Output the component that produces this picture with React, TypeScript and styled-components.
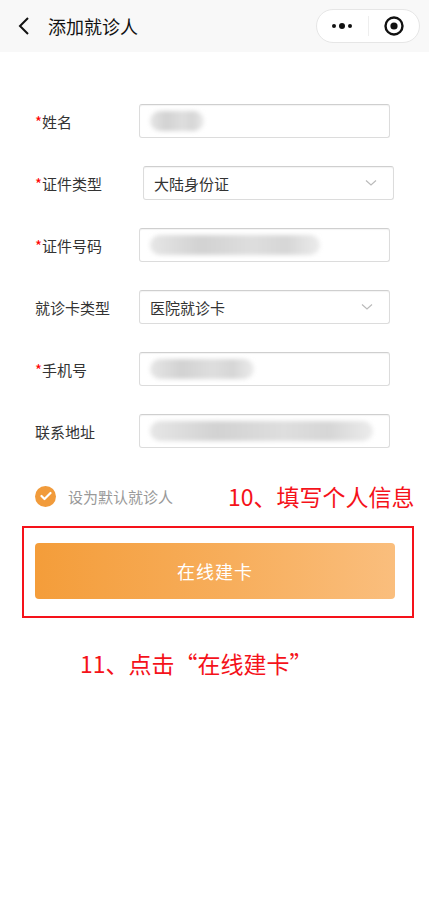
import styled, { createGlobalStyle } from 'styled-components'

const GlobalStyle = createGlobalStyle`
  html, body {
    margin: 0;
    padding: 0;
    background: #fff;
  }
  body {
    font-family: "Noto Sans CJK SC", "Noto Sans", sans-serif;
    color: #333;
  }
`

const Page = styled.div`
  width: 429px;
  min-height: 900px;
  background: #fff;
`

const NavBar = styled.div`
  height: 52px;
  background: #f8f8f8;
  display: flex;
  align-items: center;
  padding: 0 9px 0 14px;
`

const BackBtn = styled.div`
  width: 20px;
  height: 24px;
  display: flex;
  align-items: center;
  justify-content: center;
`

const NavTitle = styled.div`
  margin-left: 14px;
  font-size: 18px;
  color: #111;
  flex: 1;
`

const Capsule = styled.div`
  width: 104px;
  height: 34px;
  box-sizing: border-box;
  border: 1px solid #e6e6e6;
  border-radius: 17px;
  background: #fff;
  display: flex;
  align-items: center;
`

const CapsuleHalf = styled.div`
  flex: 1;
  height: 100%;
  display: flex;
  align-items: center;
  justify-content: center;
`

const CapsuleSep = styled.div`
  width: 1px;
  height: 20px;
  background: #eee;
`

const Form = styled.div`
  padding: 52px 0 0 35px;
  display: flex;
  flex-direction: column;
  gap: 28px;
`

const Row = styled.div`
  display: flex;
  align-items: center;
  height: 34px;
`

const Label = styled.div`
  width: 104px;
  font-size: 15px;
  color: #333;
`

const Star = styled.span`
  color: #f00;
`

const Field = styled.div<{ $shift?: number }>`
  width: 251px;
  height: 34px;
  margin-left: ${p => p.$shift || 0}px;
  box-sizing: border-box;
  border: 1px solid #dcdcdc;
  border-top-color: #cfcfcf;
  border-radius: 3px;
  box-shadow: inset 0 1px 1px rgba(0, 0, 0, 0.05);
  display: flex;
  align-items: center;
  padding: 0 16px 0 10px;
  position: relative;
  overflow: hidden;
`

const FieldText = styled.div`
  flex: 1;
  font-size: 15px;
  color: #333;
`

const Smudge = styled.div<{ $w: number }>`
  width: ${p => p.$w}px;
  height: 20px;
  background: linear-gradient(90deg, #e6e6e6, #d2d2d2 30%, #dedede 60%, #d6d6d6 80%, #ececec);
  border-radius: 10px;
  filter: blur(2px);
`

const CheckRow = styled.div`
  display: flex;
  align-items: center;
  padding: 37px 0 0 35px;
  height: 22px;
`

const CheckCircle = styled.div`
  width: 21px;
  height: 21px;
  border-radius: 50%;
  background: #f19b3b;
  display: flex;
  align-items: center;
  justify-content: center;
`

const CheckText = styled.div`
  width: 160px;
  margin-left: 12px;
  font-size: 15px;
  color: #999;
`

const Note = styled.div<{ $left: number }>`
  margin-left: ${p => p.$left}px;
  font-size: 23px;
  color: #f5121a;
  white-space: nowrap;
`

const HighlightBox = styled.div`
  margin: 19px 0 0 22px;
  width: 392px;
  height: 92px;
  box-sizing: border-box;
  border: 2px solid #f5121a;
  padding: 15px 0 0 11px;
`

const SubmitBtn = styled.div`
  width: 360px;
  height: 56px;
  border-radius: 4px;
  background: linear-gradient(90deg, #f49d3a, #f7ae5c 55%, #fabe7d);
  color: #fff;
  font-size: 18px;
  display: flex;
  align-items: center;
  justify-content: center;
  letter-spacing: 1px;
`

const Chevron = () => (
  <svg width="12" height="8" viewBox="0 0 12 8">
    <path d="M1 1.5 L6 6 L11 1.5" fill="none" stroke="#bbb" strokeWidth="1.2" />
  </svg>
)

export default function App() {
  return (
    <Page>
      <GlobalStyle />
      <NavBar>
        <BackBtn>
          <svg width="12" height="20" viewBox="0 0 12 20">
            <path d="M10 2 L2 10 L10 18" fill="none" stroke="#111" strokeWidth="2" />
          </svg>
        </BackBtn>
        <NavTitle>添加就诊人</NavTitle>
        <Capsule>
          <CapsuleHalf>
            <svg width="24" height="8" viewBox="0 0 24 8">
              <circle cx="4" cy="4" r="2" fill="#111" />
              <circle cx="12" cy="4" r="3" fill="#111" />
              <circle cx="20" cy="4" r="2" fill="#111" />
            </svg>
          </CapsuleHalf>
          <CapsuleSep />
          <CapsuleHalf>
            <svg width="22" height="22" viewBox="0 0 22 22">
              <circle cx="11" cy="11" r="8.5" fill="none" stroke="#111" strokeWidth="2.4" />
              <circle cx="11" cy="11" r="3.6" fill="#111" />
            </svg>
          </CapsuleHalf>
        </Capsule>
      </NavBar>

      <Form>
        <Row>
          <Label><Star>*</Star>姓名</Label>
          <Field><Smudge $w={54} /></Field>
        </Row>
        <Row>
          <Label><Star>*</Star>证件类型</Label>
          <Field $shift={4}>
            <FieldText>大陆身份证</FieldText>
            <Chevron />
          </Field>
        </Row>
        <Row>
          <Label><Star>*</Star>证件号码</Label>
          <Field><Smudge $w={170} /></Field>
        </Row>
        <Row>
          <Label>就诊卡类型</Label>
          <Field>
            <FieldText>医院就诊卡</FieldText>
            <Chevron />
          </Field>
        </Row>
        <Row>
          <Label><Star>*</Star>手机号</Label>
          <Field><Smudge $w={104} /></Field>
        </Row>
        <Row>
          <Label>联系地址</Label>
          <Field><Smudge $w={230} /></Field>
        </Row>
      </Form>

      <CheckRow>
        <CheckCircle>
          <svg width="12" height="10" viewBox="0 0 12 10">
            <path d="M1.5 5 L4.5 8 L10.5 2" fill="none" stroke="#fff" strokeWidth="2.2" strokeLinecap="round" strokeLinejoin="round" />
          </svg>
        </CheckCircle>
        <CheckText>设为默认就诊人</CheckText>
        <Note $left={0}>10、填写个人信息</Note>
      </CheckRow>

      <HighlightBox>
        <SubmitBtn>在线建卡</SubmitBtn>
      </HighlightBox>

      <Note $left={80} style={{ marginTop: 28 }}>11、点击“在线建卡”</Note>
    </Page>
  )
}
